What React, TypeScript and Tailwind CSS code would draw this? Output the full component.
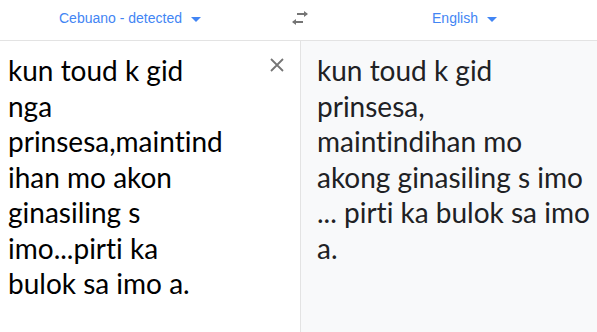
const sourceLines = [
  "kun toud k gid",
  "nga",
  "prinsesa,maintind",
  "ihan mo akon",
  "ginasiling s",
  "imo...pirti ka",
  "bulok sa imo a.",
];

const targetLines = [
  "kun toud k gid",
  "prinsesa,",
  "maintindihan mo",
  "akong ginasiling s imo",
  "... pirti ka bulok sa imo",
  "a.",
];

function Caret() {
  return (
    <svg width="10" height="5" viewBox="0 0 10 5" className="ml-[9px] mt-[2px]">
      <path d="M0 0 L10 0 L5 5 Z" fill="#4285f4" />
    </svg>
  );
}

export default function App() {
  return (
    <div className="w-[597px] h-[332px] bg-white overflow-hidden font-['Liberation_Sans',sans-serif]">
      <div className="h-[41px] flex items-center pb-[3px] border-b border-[#e3e3e3]">
        <div className="w-[300px] flex justify-center items-center pr-[40px]">
          <span className="text-[14px] text-[#4285f4]">Cebuano - detected</span>
          <Caret />
        </div>
        <div className="w-[0px] relative">
          <svg width="20" height="16" viewBox="0 0 20 16" className="absolute left-[-10px] top-[-8px]">
            <path d="M7 3h10" stroke="#757575" strokeWidth="2" fill="none" />
            <path d="M14 0 L18 3 L14 6 Z" fill="#757575" />
            <path d="M3 11h10" stroke="#757575" strokeWidth="2" fill="none" />
            <path d="M6 8 L2 11 L6 14 Z" fill="#757575" />
          </svg>
        </div>
        <div className="flex-1 flex justify-center items-center pl-[32px]">
          <span className="text-[14px] text-[#4285f4]">English</span>
          <Caret />
        </div>
      </div>
      <div className="flex h-[291px] [font-variant-ligatures:none]">
        <div className="w-[300px] flex pl-[8px] pt-[12px]">
          <div className="flex-1 text-[28px] leading-[35.5px] text-[#000] font-['Lato',sans-serif]">
            {sourceLines.map((l, i) => (
              <div key={i}>{l}</div>
            ))}
          </div>
          <svg width="14" height="14" viewBox="0 0 14 14" className="mt-[5px] mr-[16px]">
            <path d="M1 1 L13 13 M13 1 L1 13" stroke="#757575" strokeWidth="1.8" />
          </svg>
        </div>
        <div className="flex-1 bg-[#f8f9fa] border-l border-[#e3e3e3] pl-[16px] pt-[12px]">
          <div className="text-[28px] leading-[35.5px] text-[#202124] font-['Lato',sans-serif]">
            {targetLines.map((l, i) => (
              <div key={i}>{l}</div>
            ))}
          </div>
        </div>
      </div>
    </div>
  );
}
